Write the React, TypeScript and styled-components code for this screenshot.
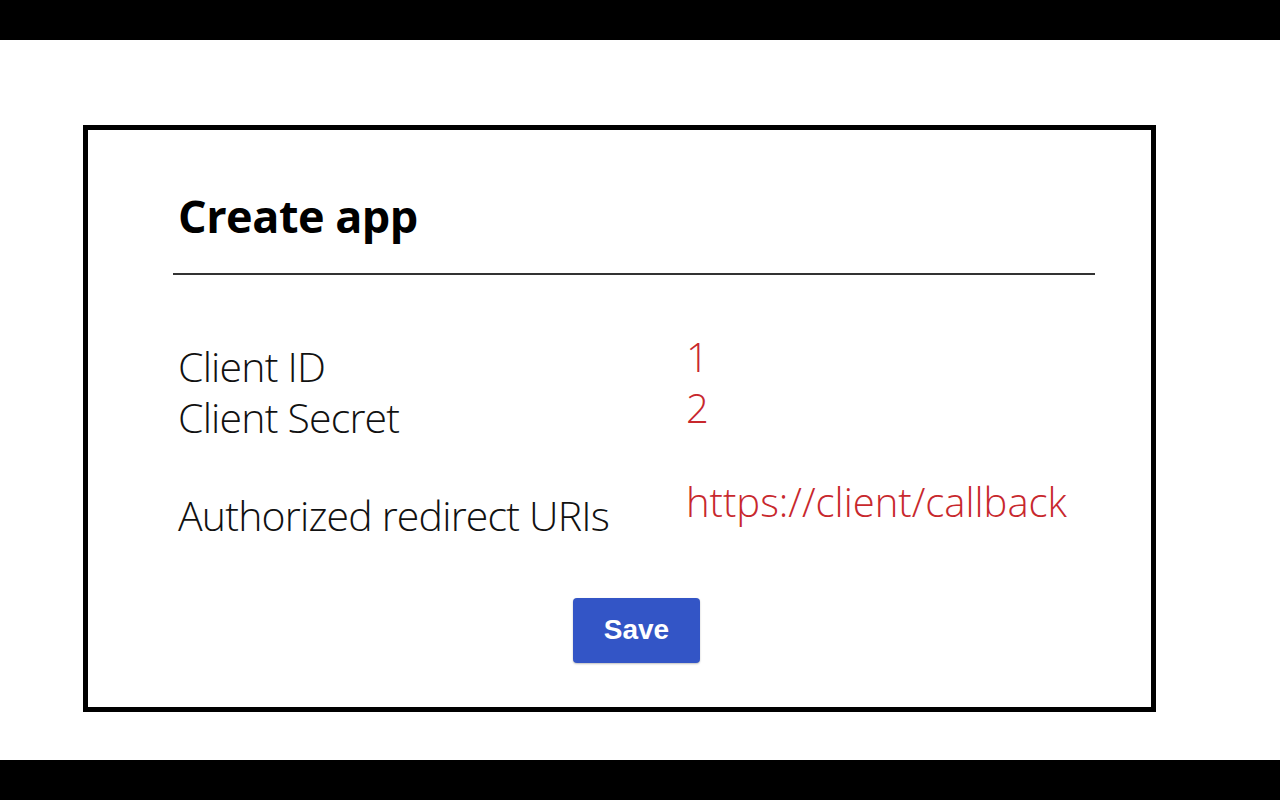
import React from 'react'
import styled, { createGlobalStyle } from 'styled-components'

const GlobalStyle = createGlobalStyle`
  html, body {
    margin: 0;
    padding: 0;
    background: #ffffff;
  }
  * {
    box-sizing: border-box;
  }
`

interface Field {
  label: string
  value: string
}

const credentials: Field[] = [
  { label: 'Client ID', value: '1' },
  { label: 'Client Secret', value: '2' }
]

const redirect: Field = { label: 'Authorized redirect URIs', value: 'https://client/callback' }

const App = () => {
  return (
    <>
      <GlobalStyle />
      <Screen>
        <Letterbox />
        <Stage>
          <Card>
            <Title>Create app</Title>
            <Divider />
            <FieldGrid $gap={66}>
              {credentials.map((f) => (
                <React.Fragment key={f.label}>
                  <Label>{f.label}</Label>
                  <Value $lift={10}>{f.value}</Value>
                </React.Fragment>
              ))}
            </FieldGrid>
            <FieldGrid $gap={47}>
              <Label>{redirect.label}</Label>
              <Value $lift={14}>{redirect.value}</Value>
            </FieldGrid>
            <Actions>
              <SaveButton type="button">Save</SaveButton>
            </Actions>
          </Card>
        </Stage>
        <Letterbox />
      </Screen>
    </>
  )
}

const Screen = styled.div`
  width: 1280px;
  height: 800px;
  display: flex;
  flex-direction: column;
  background: #ffffff;
`

const Letterbox = styled.div`
  height: 40px;
  flex: none;
  background: #000000;
`

const Stage = styled.div`
  flex: 1;
  padding: 85px 0 0 83px;
`

const Card = styled.div`
  width: 1073px;
  height: 587px;
  border: 5px solid #000000;
  padding: 54px 56px 0 85px;
  display: flex;
  flex-direction: column;
`

const Title = styled.h1`
  margin: 0 0 0 5px;
  font-family: 'Open Sans', sans-serif;
  font-weight: 700;
  font-size: 45px;
  line-height: 64px;
  color: #000000;
  letter-spacing: -0.5px;
`

const Divider = styled.hr`
  margin: 25px 0 0;
  border: none;
  height: 1.5px;
  background: #333333;
`

const FieldGrid = styled.div<{ $gap: number }>`
  display: grid;
  grid-template-columns: 508px 1fr;
  margin: ${(p) => p.$gap}px 0 0 5px;
`

const Label = styled.div`
  font-family: 'Open Sans', sans-serif;
  font-weight: 300;
  font-size: 41px;
  line-height: 51px;
  letter-spacing: -0.8px;
  color: #111111;
`

const Value = styled.div<{ $lift: number }>`
  font-family: 'Open Sans', sans-serif;
  font-weight: 300;
  font-size: 40px;
  line-height: 51px;
  color: #c8282d;
  margin-top: ${(p) => -p.$lift}px;
  margin-bottom: ${(p) => p.$lift}px;
`

const Actions = styled.div`
  display: flex;
  justify-content: center;
  margin: 57px 0 0 5px;
`

const SaveButton = styled.button`
  width: 127px;
  height: 65px;
  border: none;
  border-radius: 4px;
  background: #3355c6;
  color: #ffffff;
  font-family: 'Liberation Sans', Arial, sans-serif;
  font-weight: 700;
  font-size: 28px;
  box-shadow: 0 1px 2px rgba(0, 0, 0, 0.25);
  cursor: pointer;
`

export default App
